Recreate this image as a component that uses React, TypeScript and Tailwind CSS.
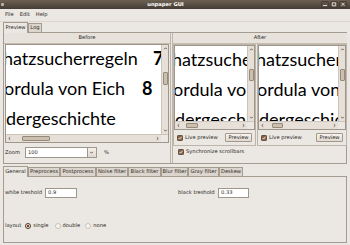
import React from "react";

const Chevron = ({ dir }: { dir: "up" | "down" | "left" | "right" }) => {
  const d = {
    up: "M1.2 3.2 L2.5 1.8 L3.8 3.2",
    down: "M1.2 1.8 L2.5 3.2 L3.8 1.8",
    left: "M3.2 1.2 L1.8 2.5 L3.2 3.8",
    right: "M1.8 1.2 L3.2 2.5 L1.8 3.8",
  }[dir];
  return (
    <svg width="5" height="5" viewBox="0 0 5 5" className="shrink-0">
      <path d={d} fill="none" stroke="#5d554c" strokeWidth="0.9" />
    </svg>
  );
};

const VScroll = ({ thumb }: { thumb: string }) => (
  <div className="w-[7px] shrink-0 flex flex-col items-center bg-[#e6e0d9] border-l border-[#cdc5bb] py-[1px]">
    <Chevron dir="up" />
    <div className="flex-1 w-full">
      <div className={`${thumb} mx-auto w-[5px] rounded-[1px] bg-[#cbbfae] border border-[#968a7c]`} />
    </div>
    <Chevron dir="down" />
  </div>
);

const HScroll = ({ thumb }: { thumb: string }) => (
  <div className="h-[8px] shrink-0 flex border-t border-[#cdc5bb]">
    <div className="flex-1 flex items-center bg-[#e6e0d9] px-[1px]">
      <Chevron dir="left" />
      <div className="flex-1 h-full flex items-center">
        <div className={`${thumb} h-[5px] rounded-[1px] bg-[#cbbfae] border border-[#968a7c]`} />
      </div>
      <Chevron dir="right" />
    </div>
    <div className="w-[7px] bg-[#ebe7e2]" />
  </div>
);

// scanned page, scrolled so the line starts are cut off
const BeforePage = () => (
  <div className="flex-1 min-w-0 bg-white overflow-hidden font-['Lato','DejaVu_Sans',sans-serif] text-[18px] leading-[30px] text-black whitespace-nowrap">
    <div className="-mt-[2px]">
      <div className="flex">
        <span className="-ml-[3px] w-[150px] shrink-0">hatzsucherregeln</span>
        <span className="font-bold">7</span>
      </div>
      <div className="flex">
        <span className="-ml-[2px] w-[138px] shrink-0">ordula von Eich</span>
        <span className="font-bold">8</span>
      </div>
      <div className="h-[30px] overflow-hidden">dergeschichte</div>
    </div>
  </div>
);

const AfterPage = () => (
  <div className="flex-1 min-w-0 bg-white overflow-hidden font-['Lato','DejaVu_Sans',sans-serif] text-[18px] leading-[30px] text-black whitespace-nowrap">
    <div className="-mt-[2px]">
      <div className="-ml-[3px]">hatzsucher</div>
      <div className="-ml-[2px]">ordula von</div>
      <div className="h-[30px] overflow-hidden">dergeschic</div>
    </div>
  </div>
);

const Check = () => (
  <svg width="6" height="6" viewBox="0 0 6 6" className="shrink-0">
    <rect x="0.5" y="0.5" width="5" height="5" rx="0.6" fill="#8a6647" stroke="#4e3d30" strokeWidth="0.8" />
    <path d="M1.5 3 L2.6 4.1 L4.6 1.8" fill="none" stroke="#f4ece2" strokeWidth="0.9" />
  </svg>
);

const Radio = ({ on }: { on?: boolean }) => (
  <svg width="6" height="6" viewBox="0 0 6 6" className="shrink-0">
    <circle cx="3" cy="3" r="2.5" fill="#f7f4f0" stroke={on ? "#4d3628" : "#b8afa4"} strokeWidth={on ? 1 : 0.7} />
    {on && <circle cx="3" cy="3" r="1.2" fill="#7a3f22" />}
  </svg>
);

const Button = ({ className }: { className: string }) => (
  <div className={`${className} h-[9px] flex items-center justify-center rounded-[1px] border border-[#a2988c] bg-gradient-to-b from-[#f7f4f0] to-[#e0d9d1]`}>
    Preview
  </div>
);

const AfterPane = ({ className, thumb }: { className: string; thumb: string }) => (
  <div className={`${className} flex flex-col border border-[#bdb4aa]`}>
    <div className="flex flex-col border border-[#9f968b] h-[85px]">
      <div className="flex flex-1 min-h-0">
        <AfterPage />
        <VScroll thumb="mt-[17px] h-[12px]" />
      </div>
      <HScroll thumb={thumb} />
    </div>
    <div className="flex-1 flex items-center px-[3px]">
      <Check />
      <span className="ml-[2px]">Live preview</span>
      <Button className="ml-auto w-[27px]" />
    </div>
  </div>
);

const WinButton = ({ glyph }: { glyph: string }) => (
  <svg width="8" height="7" viewBox="0 0 8 7">
    <rect x="0.5" y="0.5" width="7" height="6" rx="1" fill="#5a5047" stroke="#3a332d" strokeWidth="0.6" />
    <path d={glyph} fill="none" stroke="#e8e2da" strokeWidth="0.9" />
  </svg>
);

const TabHead = ({ label, w, active }: { label: string; w: string; active?: boolean }) => (
  <div
    className={`${w} flex items-center justify-center border border-b-0 border-[#a59c91] ${
      active ? "h-[11px] -mb-[1px] bg-[#ebe7e2] relative" : "h-[9px] bg-[#dcd5cd]"
    }`}
  >
    {label}
  </div>
);

export default function App() {
  return (
    <div className="w-[350px] h-[245px] overflow-hidden bg-[#ebe7e2] font-['DejaVu_Sans',sans-serif] text-[5.2px] text-[#2d2a26] flex flex-col">
      {/* title bar */}
      <div className="h-[9px] shrink-0 flex items-center bg-gradient-to-b from-[#6e6152] to-[#443c35]">
        <div className="w-[10px] pl-[1px]">
          <div className="w-[3px] h-[3px] bg-[#bdb2a5] rounded-[1px]" />
        </div>
        <div className="flex-1 text-center text-white font-bold">unpaper GUI</div>
        <div className="w-[29px] flex gap-[1px]">
          <WinButton glyph="M2 4.5 H6" />
          <WinButton glyph="M2.3 1.8 H5.7 V4.8 H2.3 Z" />
          <WinButton glyph="M2.5 1.8 L5.5 4.8 M5.5 1.8 L2.5 4.8" />
        </div>
      </div>

      {/* menu bar */}
      <div className="h-[13px] shrink-0 flex items-center gap-[6px] pl-[5px] border-b border-[#ddd6ce]">
        <span>File</span>
        <span>Edit</span>
        <span>Help</span>
      </div>

      <div className="px-[3px] flex flex-col">
        {/* top notebook */}
        <div className="flex items-end h-[10px]">
          <TabHead label="Preview" w="w-[25px]" active />
          <TabHead label="Log" w="w-[14px]" />
        </div>
        <div className="h-[132px] border border-[#a59c91] flex gap-[1px]">
          {/* Before */}
          <div className="w-[167px] flex flex-col border-r border-[#bdb4aa]">
            <div className="h-[11px] shrink-0 flex items-center justify-center border-b border-[#c6bdb2] bg-[#e7e2dc]">
              Before
            </div>
            <div className="mx-[1px] h-[99px] flex flex-col border border-[#9f968b]">
              <div className="flex flex-1 min-h-0">
                <BeforePage />
                <VScroll thumb="mt-[21px] h-[13px]" />
              </div>
              <HScroll thumb="ml-[10px] w-[28px]" />
            </div>
            <div className="mt-[4px] h-[11px] flex items-center pl-[1px]">
              <span>Zoom</span>
              <div className="ml-[5px] w-[63px] h-[11px] flex items-center pl-[2px] bg-white border border-[#9f968b]">
                100
              </div>
              <div className="w-[9px] h-[11px] flex items-center justify-center border border-l-0 border-[#a2988c] bg-gradient-to-b from-[#f5f1ec] to-[#e0d9d1]">
                <Chevron dir="down" />
              </div>
              <span className="ml-[7px]">%</span>
            </div>
          </div>

          {/* After */}
          <div className="w-[176px] flex flex-col border-l border-[#bdb4aa]">
            <div className="h-[11px] shrink-0 flex items-center justify-center border-b border-[#c6bdb2] bg-[#e7e2dc]">
              After
            </div>
            <div className="h-[102px] flex gap-[1px]">
              <AfterPane className="w-[83px]" thumb="ml-[5px] w-[12px]" />
              <AfterPane className="w-[90px]" thumb="ml-[7px] w-[11px]" />
            </div>
            <div className="h-[12px] flex items-center pl-[5px]">
              <Check />
              <span className="ml-[2px]">Synchronize scrollbars</span>
            </div>
          </div>
        </div>

        {/* bottom notebook */}
        <div className="mt-[2px] flex items-end h-[10px]">
          <TabHead label="General" w="w-[25px]" active />
          <TabHead label="Preprocess" w="w-[32px]" />
          <TabHead label="Postprocess" w="w-[36px]" />
          <TabHead label="Noise filter" w="w-[32px]" />
          <TabHead label="Black filter" w="w-[33px]" />
          <TabHead label="Blur filter" w="w-[27px]" />
          <TabHead label="Gray filter" w="w-[31px]" />
          <TabHead label="Deskew" w="w-[24px]" />
        </div>
        <div className="h-[67px] border border-[#a59c91] flex flex-col pl-[1px]">
          <div className="mt-[11px] grid grid-cols-[173px_1fr] h-[10px]">
            <div className="flex items-center">
              <span className="w-[40px]">white treshold</span>
              <div className="w-[32px] h-[10px] flex items-center pl-[2px] bg-white border border-[#9f968b]">0.9</div>
            </div>
            <div className="flex items-center">
              <span className="w-[40px]">black treshold</span>
              <div className="w-[31px] h-[10px] flex items-center pl-[2px] bg-white border border-[#9f968b]">0.33</div>
            </div>
          </div>
          <div className="mt-[23px] h-[10px] flex items-center">
            <span>layout</span>
            <span className="ml-[4px]"><Radio on /></span>
            <span className="ml-[2px]">single</span>
            <span className="ml-[6px]"><Radio /></span>
            <span className="ml-[2px]">double</span>
            <span className="ml-[5px]"><Radio /></span>
            <span className="ml-[2px]">none</span>
          </div>
        </div>
      </div>
    </div>
  );
}
